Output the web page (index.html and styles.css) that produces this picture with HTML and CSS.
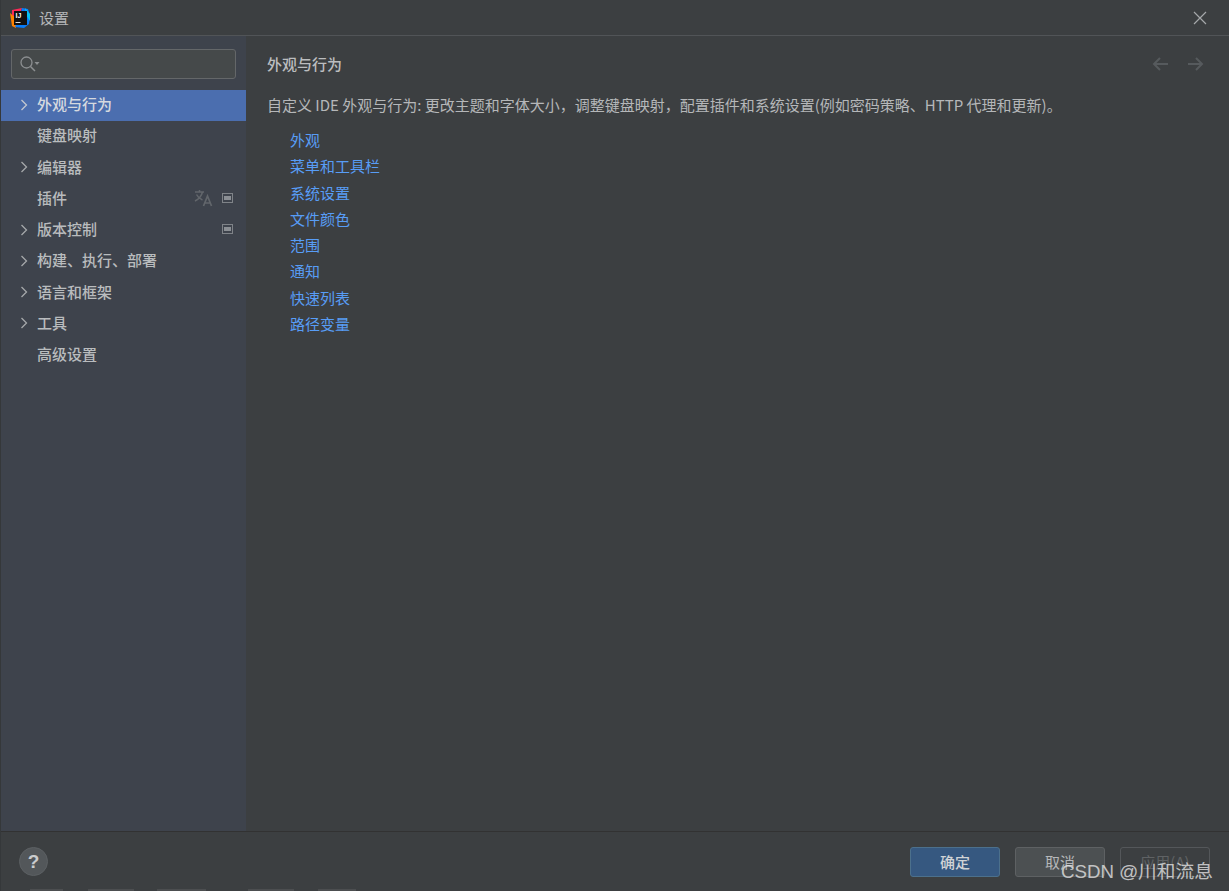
FILE: index.html
```html
<!DOCTYPE html>
<html lang="zh">
<head>
<meta charset="utf-8">
<title>设置</title>
<link rel="stylesheet" href="styles.css">
</head>
<body>
<div class="dialog">
  <header class="titlebar">
    <svg class="logo" width="20" height="20" viewBox="0 0 20 20">
      <path d="M2 2 L12 0 L9 8 L2 14 Z" fill="#fe2857"/>
      <path d="M0 5 L6 10 L6 20 L2 18 Z" fill="#ff8100"/>
      <path d="M12 0 L18 1 L20 7 L19 16 L14 20 L5 19 L10 8 Z" fill="#087cfa"/>
      <path d="M15 0 L20 6 L20 13 L16 7 Z" fill="#07c3f2"/>
      <rect x="4" y="3" width="13" height="14" fill="#111"/>
      <rect x="5.5" y="14" width="5" height="1" fill="#ddd"/>
      <text x="5.5" y="10" class="logo-text">IJ</text>
    </svg>
    <span class="title">设置</span>
    <svg class="close" width="14" height="14" viewBox="0 0 14 14"><path d="M1 1 L13 13 M13 1 L1 13" stroke="#a5a8aa" stroke-width="1.2" fill="none"/></svg>
  </header>
  <div class="main">
    <aside class="sidebar">
      <div class="search">
        <svg width="22" height="18" viewBox="0 0 22 18"><circle cx="7.5" cy="7.5" r="5.5" fill="none" stroke="#8c8f91" stroke-width="1.3"/><path d="M11.5 11.5 L16 16" stroke="#8c8f91" stroke-width="1.5"/><path d="M15.5 7 L20.5 7 L18 10 Z" fill="#8c8f91"/></svg>
      </div>
      <nav class="tree">
        <div class="row selected"><svg class="arrow" width="8" height="12" viewBox="0 0 8 12"><path d="M1.5 1 L6.5 6 L1.5 11" fill="none" stroke="#c4c8d0" stroke-width="1.3"/></svg><span class="label">外观与行为</span></div>
        <div class="row"><span class="arrow"></span><span class="label">键盘映射</span></div>
        <div class="row"><svg class="arrow" width="8" height="12" viewBox="0 0 8 12"><path d="M1.5 1 L6.5 6 L1.5 11" fill="none" stroke="#a5a8aa" stroke-width="1.3"/></svg><span class="label">编辑器</span></div>
        <div class="row"><span class="arrow"></span><span class="label">插件</span>
          <svg class="translate" width="20" height="18" viewBox="0 0 20 18"><path d="M1 3 H10 M5.5 1 V3 M8.5 3 C7.5 7 4 10.5 1 12 M2.5 5.5 C4 8.5 6 10 8.5 11" fill="none" stroke="#62666b" stroke-width="1.5"/><path d="M9.5 17 L13.5 7 L17.5 17 M11 14 H16" fill="none" stroke="#62666b" stroke-width="1.7"/></svg>
          <svg class="module" width="11" height="10" viewBox="0 0 11 10"><rect x="0.5" y="0.5" width="10" height="9" fill="none" stroke="#7f8388"/><rect x="2" y="3" width="7" height="4" fill="#8b8f94"/></svg></div>
        <div class="row"><svg class="arrow" width="8" height="12" viewBox="0 0 8 12"><path d="M1.5 1 L6.5 6 L1.5 11" fill="none" stroke="#a5a8aa" stroke-width="1.3"/></svg><span class="label">版本控制</span>
          <svg class="module" width="11" height="10" viewBox="0 0 11 10"><rect x="0.5" y="0.5" width="10" height="9" fill="none" stroke="#7f8388"/><rect x="2" y="3" width="7" height="4" fill="#8b8f94"/></svg></div>
        <div class="row"><svg class="arrow" width="8" height="12" viewBox="0 0 8 12"><path d="M1.5 1 L6.5 6 L1.5 11" fill="none" stroke="#a5a8aa" stroke-width="1.3"/></svg><span class="label">构建、执行、部署</span></div>
        <div class="row"><svg class="arrow" width="8" height="12" viewBox="0 0 8 12"><path d="M1.5 1 L6.5 6 L1.5 11" fill="none" stroke="#a5a8aa" stroke-width="1.3"/></svg><span class="label">语言和框架</span></div>
        <div class="row"><svg class="arrow" width="8" height="12" viewBox="0 0 8 12"><path d="M1.5 1 L6.5 6 L1.5 11" fill="none" stroke="#a5a8aa" stroke-width="1.3"/></svg><span class="label">工具</span></div>
        <div class="row"><span class="arrow"></span><span class="label">高级设置</span></div>
      </nav>
    </aside>
    <main class="content">
      <div class="content-head">
        <h1 class="heading">外观与行为</h1>
        <div class="nav-arrows">
          <svg width="17" height="14" viewBox="0 0 17 14"><path d="M16 7 H2 M8 1 L2 7 L8 13" fill="none" stroke="#565a5d" stroke-width="2"/></svg>
          <svg width="17" height="14" viewBox="0 0 17 14"><path d="M1 7 H15 M9 1 L15 7 L9 13" fill="none" stroke="#565a5d" stroke-width="2"/></svg>
        </div>
      </div>
      <p class="desc">自定义 IDE 外观与行为: 更改主题和字体大小，调整键盘映射，配置插件和系统设置(例如密码策略、HTTP 代理和更新)。</p>
      <ul class="links">
        <li>外观</li>
        <li>菜单和工具栏</li>
        <li>系统设置</li>
        <li>文件颜色</li>
        <li>范围</li>
        <li>通知</li>
        <li>快速列表</li>
        <li>路径变量</li>
      </ul>
    </main>
  </div>
  <footer class="footer">
    <div class="help">?</div>
    <div class="buttons">
      <div class="btn primary">确定</div>
      <div class="btn">取消</div>
      <div class="btn disabled">应用(A)</div>
    </div>
    <div class="watermark">CSDN @川和流息</div>
    <div class="remnants"><span class="bit bit-a"></span><span class="bit bit-b"></span><span class="bit bit-c"></span><span class="bit bit-d"></span><span class="bit bit-e"></span></div>
  </footer>
</div>
</body>
</html>
```

FILE: styles.css
```css
* { box-sizing: border-box; }
html, body { margin: 0; height: 100%; overflow: hidden; }
body { background: #3c3f41; font-family: "Noto Sans CJK SC", "Liberation Sans", sans-serif; font-size: 15px; color: #bbbbbb; }
.dialog { width: 1229px; height: 891px; display: flex; flex-direction: column; border-left: 1px solid #35383a; }
.titlebar { height: 36px; flex: none; display: flex; align-items: center; padding: 0 22px 0 9px; border-bottom: 1px solid #515457; }
.logo { flex: none; }
.logo-text { font: bold 7px "Liberation Sans", sans-serif; fill: #fff; }
.title { margin-left: 9px; font-size: 15px; color: #b4b6b8; }
.close { margin-left: auto; }
.main { flex: 1; display: flex; min-height: 0; }
.sidebar { width: 245px; flex: none; background: #3e434c; }
.search { margin: 13px 10px 0 10px; height: 30px; background: #45494a; border: 1px solid #646769; border-radius: 3px; display: flex; align-items: center; padding-left: 7px; }
.tree { margin-top: 11px; }
.row { height: 31.25px; display: flex; align-items: center; padding: 0 13px 0 19px; font-size: 15px; font-weight: 500; color: #b9bcbe; }
.row.selected { background: #4b6eaf; color: #d5d9df; }
.arrow { width: 8px; flex: none; display: block; margin-bottom: 2px; }
.label { margin-left: 9px; margin-bottom: 4px; }
.translate { margin-left: auto; margin-right: 8px; margin-bottom: 3px; }
.translate + .module { margin-left: 0; }
.module { margin-left: auto; flex: none; margin-bottom: 3px; }
.content { flex: 1; padding: 16px 25px 0 21px; }
.content-head { display: flex; justify-content: space-between; align-items: center; height: 24px; }
.heading { margin: 0 0 1px; font-size: 15px; font-weight: 500; color: #bbbdbf; }
.nav-arrows { display: flex; gap: 18px; }
.desc { margin: 17px 0 0; font-size: 15px; line-height: 24px; color: #b5b7b9; white-space: nowrap; }
.links { list-style: none; margin: 10px 0 0; padding: 0 0 0 23px; color: #589df6; font-size: 15px; }
.links li { height: 26.25px; line-height: 26px; }
.footer { position: relative; height: 60px; flex: none; border-top: 1px solid #323232; display: flex; align-items: center; justify-content: space-between; padding: 0 19px 0 18px; }
.help { width: 29px; height: 29px; border-radius: 50%; background: #53575a; color: #c9cbcd; font: bold 19px/29px "Liberation Sans", sans-serif; text-align: center; border: 1px solid #5c6063; line-height: 27px; }
.buttons { display: flex; gap: 15px; }
.btn { width: 90px; height: 30px; border: 1px solid #5e6163; border-radius: 3px; background: #4c5052; font-size: 15px; line-height: 27px; text-align: center; color: #b5b7b9; }
.btn.primary { background: #365880; border-color: #4c708c; color: #d0d3d6; font-weight: 500; }
.btn.disabled { background: transparent; border-color: #54575a; color: #5f6264; }
.watermark { position: absolute; left: 1060px; top: 28px; font-size: 18.7px; line-height: 24px; color: rgba(228,228,228,0.8); font-family: "Liberation Sans", "Noto Sans CJK SC", sans-serif; white-space: nowrap; }
.remnants { position: absolute; left: 0; right: 0; bottom: 0; height: 2px; }
.bit { position: absolute; top: 0; height: 2px; background: #4c4e50; }
.bit-a { left: 29px; width: 33px; }
.bit-b { left: 87px; width: 46px; }
.bit-c { left: 156px; width: 49px; }
.bit-d { left: 247px; width: 46px; }
.bit-e { left: 317px; width: 38px; }
```
